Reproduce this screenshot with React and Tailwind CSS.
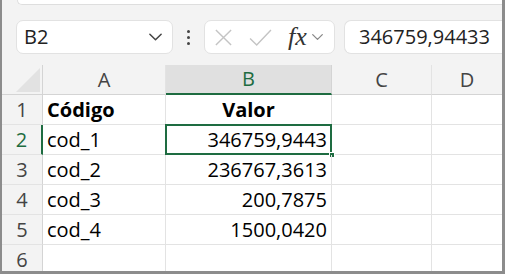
import React from 'react';

const cellFont = { fontFamily: '"Open Sans", "Noto Sans", sans-serif' };

function Chevron({ className }) {
  return (
    <svg viewBox="0 0 16 10" className={className} fill="none" stroke="currentColor" strokeWidth="1.6" strokeLinecap="round" strokeLinejoin="round">
      <path d="M2 2l6 6 6-6" />
    </svg>
  );
}

function FormulaBar() {
  return (
    <div className="shrink-0 flex items-start h-[59px] pl-[14px] pt-[14px] bg-[#f3f3f3]" style={cellFont}>
      {/* Name box */}
      <div className="flex items-center justify-between w-[157px] h-[34px] bg-white border border-[#e2e2e2] rounded-[7px] pl-[7px] pr-[9px]">
        <span className="text-[20px] text-[#222] leading-none">B2</span>
        <Chevron className="w-[15px] h-[10px] text-[#444]" />
      </div>
      {/* Dots */}
      <div className="flex flex-col gap-[3px] mx-[14px] self-start mt-[10px]">
        <span className="w-[3px] h-[3px] bg-[#444] rounded-full"></span>
        <span className="w-[3px] h-[3px] bg-[#444] rounded-full"></span>
        <span className="w-[3px] h-[3px] bg-[#444] rounded-full"></span>
      </div>
      {/* Function buttons */}
      <div className="flex items-center w-[131px] h-[34px] bg-white border border-[#e2e2e2] rounded-[7px] pl-[9px]">
        <svg viewBox="0 0 20 20" className="w-[19px] h-[19px] text-[#c4c4c4]" fill="none" stroke="currentColor" strokeWidth="1.5">
          <path d="M2 2l16 16M18 2L2 18" />
        </svg>
        <svg viewBox="0 0 24 20" className="w-[25px] h-[19px] ml-[15px] text-[#c4c4c4]" fill="none" stroke="currentColor" strokeWidth="1.5">
          <path d="M1 11l7 7L23 2" />
        </svg>
        <span className="ml-[15px] text-[26px] italic text-[#333] leading-none" style={{ fontFamily: '"Liberation Serif", serif' }}>fx</span>
        <Chevron className="w-[13px] h-[8px] ml-[4px] text-[#888]" />
      </div>
      {/* Formula content */}
      <div className="flex items-center flex-1 h-[34px] ml-[9px] bg-white border border-[#e2e2e2] border-r-0 rounded-l-[7px] pl-[14px]">
        <span className="text-[20px] text-[#222] leading-none">346759,94433</span>
      </div>
    </div>
  );
}

const rows = [
  ['Código', 'Valor'],
  ['cod_1', '346759,9443'],
  ['cod_2', '236767,3613'],
  ['cod_3', '200,7875'],
  ['cod_4', '1500,0420'],
  ['', ''],
];

function Sheet() {
  const head = 'flex items-center justify-center bg-[#f3f3f3] text-[#444] border-b border-[#d4d4d4]';
  const grid = 'border-r border-b border-[#e3e3e3]';
  return (
    <div className="shrink-0 grid grid-cols-[41px_123px_166px_100px_1fr] auto-rows-[30px] text-[20px] text-black" style={cellFont}>
      <div className={`${head} border-r border-r-[#d4d4d4] relative`}>
        <svg viewBox="0 0 24 24" className="absolute right-[2px] bottom-[2px] w-[24px] h-[24px]">
          <path d="M24 0V24H0Z" fill="#e2e2e2" />
        </svg>
      </div>
      <div className={`${head} border-r border-r-[#e3e3e3]`}>A</div>
      <div className="flex items-center justify-center bg-[#e0e0e0] text-[#1e6c41] border-b-2 border-[#1e6c41] border-r border-r-[#d4d4d4]">B</div>
      <div className={`${head} border-r border-r-[#e3e3e3]`}>C</div>
      <div className={head}>D</div>

      {rows.map((r, i) => {
        const sel = i === 1;
        return (
          <React.Fragment key={i}>
            <div className={`flex items-center justify-center bg-[#f3f3f3] border-b border-[#e3e3e3] ${sel ? 'bg-[#e0e0e0] text-[#1e6c41] border-r-2 border-r-[#1e6c41]' : 'text-[#444] border-r border-r-[#d4d4d4]'}`}>
              {i + 1}
            </div>
            <div className={`${grid} flex items-center pl-[4px] ${i === 0 ? 'font-bold' : ''}`}>{r[0]}</div>
            <div className={`${grid} relative flex items-center ${i === 0 ? 'justify-center font-bold' : 'justify-end pr-[4px]'}`}>
              {r[1]}
              {sel && (
                <>
                  <div className="absolute -left-px -top-px -right-px -bottom-px border-2 border-[#1e6c41]"></div>
                  <div className="absolute -right-[4px] -bottom-[4px] w-[6px] h-[6px] bg-[#1e6c41] border border-white"></div>
                </>
              )}
            </div>
            <div className={grid}></div>
            <div className="border-b border-[#e3e3e3]"></div>
          </React.Fragment>
        );
      })}
    </div>
  );
}

export default function App() {
  return (
    <div className="w-[505px] h-[274px] overflow-hidden bg-white border-l-2 border-r-[3px] border-b-[3px] border-[#8c8c8c] flex flex-col">
      <div className="shrink-0 h-[6px] bg-[#f3f3f3] pl-[15px]">
        <div className="h-[5px] bg-white border-b border-l border-[#dedede] rounded-bl-[6px]"></div>
      </div>
      <FormulaBar />
      <Sheet />
    </div>
  );
}
